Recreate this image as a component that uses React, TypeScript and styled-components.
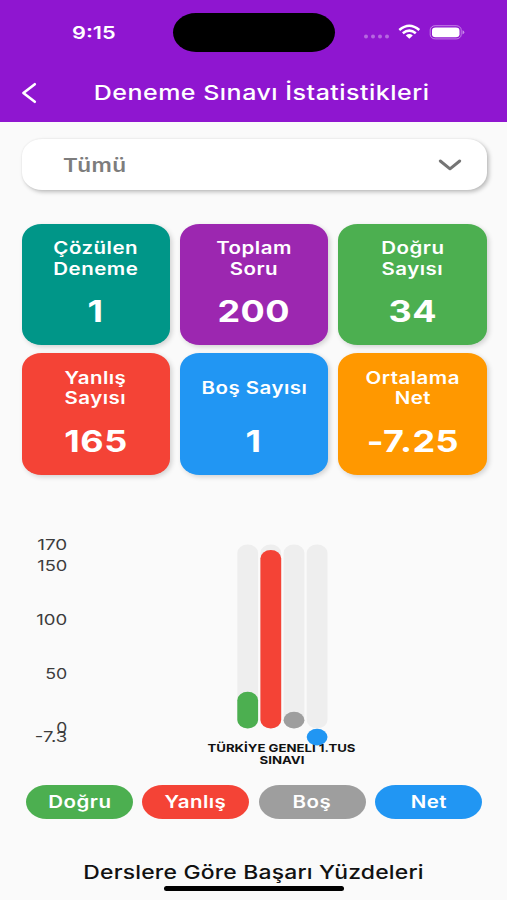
import React from "react";
import styled, { createGlobalStyle } from "styled-components";

const GlobalStyle = createGlobalStyle`
  * { box-sizing: border-box; }
  html, body { margin: 0; padding: 0; background: #fafafa; }
  body { font-family: Inter, "Liberation Sans", sans-serif; font-optical-sizing: none; overflow: hidden; }
`;

const Screen = styled.main`
  width: 507px;
  height: 900px;
  overflow: hidden;
  display: flex;
  flex-direction: column;
  background: #fafafa;
`;

/* Wide lettering shared by every label */
const Wide = styled.span<{ $spacing?: number; $from?: string }>`
  display: inline-block;
  white-space: nowrap;
  letter-spacing: ${(p) => p.$spacing ?? 0}px;
  transform: scaleX(1.22);
  transform-origin: ${(p) => p.$from ?? "center"};
`;

const Header = styled.header`
  flex: none;
  height: 122px;
  background: #8f16d0;
  color: #fff;
`;

const StatusBar = styled.div`
  display: grid;
  grid-template-columns: 173px 162px 1fr;
  align-items: center;
  height: 64px;
`;

const Clock = styled.div`
  padding-left: 71.5px;
  font-size: 17.8px;
  font-weight: 600;
`;

const Island = styled.div`
  height: 39px;
  border-radius: 23px / 19.5px;
  background: #000;
`;

const StatusIcons = styled.div`
  padding-left: 28px;
  display: flex;
  align-items: center;
`;

const TitleBar = styled.div`
  display: grid;
  grid-template-columns: 62px 1fr 45px;
  align-items: center;
  height: 58px;
`;

const BackButton = styled.button`
  border: 0;
  padding: 0 0 0 20px;
  background: none;
  display: flex;
`;

const Title = styled.h1`
  margin: 0;
  text-align: center;
  font-size: 20.5px;
  line-height: 26px;
  font-weight: 500;
`;

const Select = styled.button`
  flex: none;
  margin: 17px 20.5px 0 21.5px;
  height: 51px;
  padding: 0 22.5px 0 41.5px;
  display: flex;
  align-items: center;
  justify-content: space-between;
  border: 0;
  border-radius: 20px / 17px;
  background: #fff;
  color: #7d7d7d;
  font: 600 18.5px Inter, sans-serif;
  box-shadow: 2px 2px 4px rgba(0, 0, 0, 0.25), 0 0 2px rgba(0, 0, 0, 0.07);
`;

const Cards = styled.section`
  flex: none;
  margin: 33.5px 20.5px 0 21.5px;
  display: grid;
  grid-template-columns: repeat(3, 1fr);
  grid-auto-rows: 121.3px;
  gap: 8.7px 10.3px;
`;

const Card = styled.article<{ $color: string }>`
  display: flex;
  flex-direction: column;
  align-items: center;
  padding-top: 14.5px;
  border-radius: 19.5px / 16px;
  background: ${(p) => p.$color};
  color: #fff;
  box-shadow: 2px 2px 5px rgba(0, 0, 0, 0.16);
`;

const CardLabel = styled.div`
  height: 41px;
  display: flex;
  flex-direction: column;
  align-items: center;
  justify-content: center;
  font-size: 16.8px;
  line-height: 20.3px;
  font-weight: 600;
`;

const CardValue = styled.div`
  margin-top: 14px;
  font-size: 29.5px;
  line-height: 36px;
  font-weight: 700;
`;

const Chart = styled.svg`
  flex: none;
  margin-top: 45px;
  display: block;
  font-family: Inter, sans-serif;
`;

const Legend = styled.div`
  flex: none;
  margin: 5px 25px 0 26px;
  display: grid;
  grid-template-columns: repeat(4, 1fr);
  gap: 9.3px;
`;

const Pill = styled.div<{ $color: string }>`
  height: 34px;
  display: flex;
  align-items: center;
  justify-content: center;
  border-radius: 20.5px / 17px;
  background: ${(p) => p.$color};
  color: #fff;
  font-size: 16.8px;
  font-weight: 600;
`;

const SectionTitle = styled.h2`
  flex: none;
  margin: 41px 0 0;
  text-align: center;
  font-size: 18.8px;
  line-height: 26px;
  font-weight: 500;
  color: #111;
`;

const HomeIndicator = styled.div`
  flex: none;
  align-self: center;
  width: 180px;
  height: 5.4px;
  border-radius: 3px;
  background: #000;
`;

const cards = [
  { lines: ["Çözülen", "Deneme"], value: "1", color: "#009688" },
  { lines: ["Toplam", "Soru"], value: "200", color: "#9c27b0" },
  { lines: ["Doğru", "Sayısı"], value: "34", color: "#4caf50" },
  { lines: ["Yanlış", "Sayısı"], value: "165", color: "#f44336" },
  { lines: ["Boş Sayısı"], value: "1", color: "#2196f3" },
  { lines: ["Ortalama", "Net"], value: "-7.25", color: "#ff9800" },
];

const legend = [
  { name: "Doğru", color: "#4caf50" },
  { name: "Yanlış", color: "#f44336" },
  { name: "Boş", color: "#9e9e9e" },
  { name: "Net", color: "#2196f3" },
];

const ticks = [
  { text: "170", y: 29.5, w: 30 },
  { text: "150", y: 51, w: 30 },
  { text: "100", y: 105.2, w: 31 },
  { text: "50", y: 159.3, w: 22 },
  { text: "0", y: 213.2, w: 11 },
  { text: "-7.3", y: 221.5, w: 32.5 },
];

const bars = [
  { x: 237.3, top: 171.8, bottom: 208.5, color: "#4caf50" },
  { x: 260.4, top: 30, bottom: 208.5, color: "#f44336" },
  { x: 283.6, top: 191.8, bottom: 208.5, color: "#9e9e9e" },
  { x: 306.7, top: 208.7, bottom: 225.5, color: "#2196f3" },
];

function ExamChart() {
  return (
    <Chart width="507" height="260" viewBox="0 0 507 260">
      {ticks.map((t) => (
        <text key={t.text} x={67.3 - t.w} y={t.y} textLength={t.w} lengthAdjust="spacingAndGlyphs" fontSize="14.8" fill="#3c3c3c">
          {t.text}
        </text>
      ))}
      <g fontSize="11" fontWeight="700" fill="#111">
        <text x="207.5" y="231.6" textLength="148" lengthAdjust="spacingAndGlyphs">TÜRKİYE GENELİ 1.TUS</text>
        <text x="259.5" y="244" textLength="45" lengthAdjust="spacingAndGlyphs">SINAVI</text>
      </g>
      {bars.map((b) => (
        <g key={b.x}>
          <rect x={b.x} y="24.5" width="20.8" height="184" rx="10.4" ry="8.5" fill="#eee" />
          <rect x={b.x} y={b.top} width="20.8" height={b.bottom - b.top} rx="10.4" ry="8.4" fill={b.color} />
        </g>
      ))}
    </Chart>
  );
}

export default function App() {
  return (
    <Screen>
      <GlobalStyle />
      <Header>
        <StatusBar>
          <Clock><Wide $from="left">9:15</Wide></Clock>
          <Island />
          <StatusIcons>
            <svg width="102" height="18" viewBox="0 0 102 18" fill="#fff">
              <g opacity=".35">
                <circle cx="3" cy="13.5" r="2" />
                <circle cx="10" cy="13.5" r="2" />
                <circle cx="17" cy="13.5" r="2" />
                <circle cx="24" cy="13.5" r="2" />
              </g>
              <g fill="none" stroke="#fff" strokeWidth="2.5">
                <path d="M36.3 7Q46.3-1.4 56.3 7" />
                <path d="M39.8 10.3Q46.3 5 52.8 10.3" />
              </g>
              <path d="M42.8 12.5Q46.3 9.6 49.8 12.5L46.3 15.8Z" />
              <rect x="67.2" y="2.7" width="31" height="13.2" rx="5" ry="4.2" fill="none" stroke="#fff" strokeOpacity=".45" />
              <rect x="69" y="4.4" width="27.5" height="9.8" rx="3.6" ry="3" />
              <path d="M99.5 7.2q1.8.6 1.8 2.1t-1.8 2.1z" opacity=".5" />
            </svg>
          </StatusIcons>
        </StatusBar>
        <TitleBar>
          <BackButton aria-label="Geri">
            <svg width="20" height="24" viewBox="0 0 20 24" fill="none" stroke="#fff" strokeWidth="2.6" strokeLinecap="round" strokeLinejoin="round">
              <path d="M14.8 3.2L3.4 12L14.8 20.8" />
            </svg>
          </BackButton>
          <Title><Wide $spacing={0.4}>Deneme Sınavı İstatistikleri</Wide></Title>
        </TitleBar>
      </Header>
      <Select>
        <Wide $from="left" $spacing={0.4}>Tümü</Wide>
        <svg width="28" height="16" viewBox="0 0 28 16" fill="none" stroke="#757575" strokeWidth="3" strokeLinecap="round" strokeLinejoin="round">
          <path d="M4.3 4L14 11.8L23.7 4" />
        </svg>
      </Select>
      <Cards>
        {cards.map((c) => (
          <Card key={c.lines.join(" ")} $color={c.color}>
            <CardLabel>
              {c.lines.map((line) => <Wide key={line} $spacing={0.4}>{line}</Wide>)}
            </CardLabel>
            <CardValue><Wide $spacing={0.4}>{c.value}</Wide></CardValue>
          </Card>
        ))}
      </Cards>
      <ExamChart />
      <Legend>
        {legend.map((l) => (
          <Pill key={l.name} $color={l.color}><Wide $spacing={0.4}>{l.name}</Wide></Pill>
        ))}
      </Legend>
      <SectionTitle><Wide $spacing={0.15}>Derslere Göre Başarı Yüzdeleri</Wide></SectionTitle>
      <HomeIndicator />
    </Screen>
  );
}
